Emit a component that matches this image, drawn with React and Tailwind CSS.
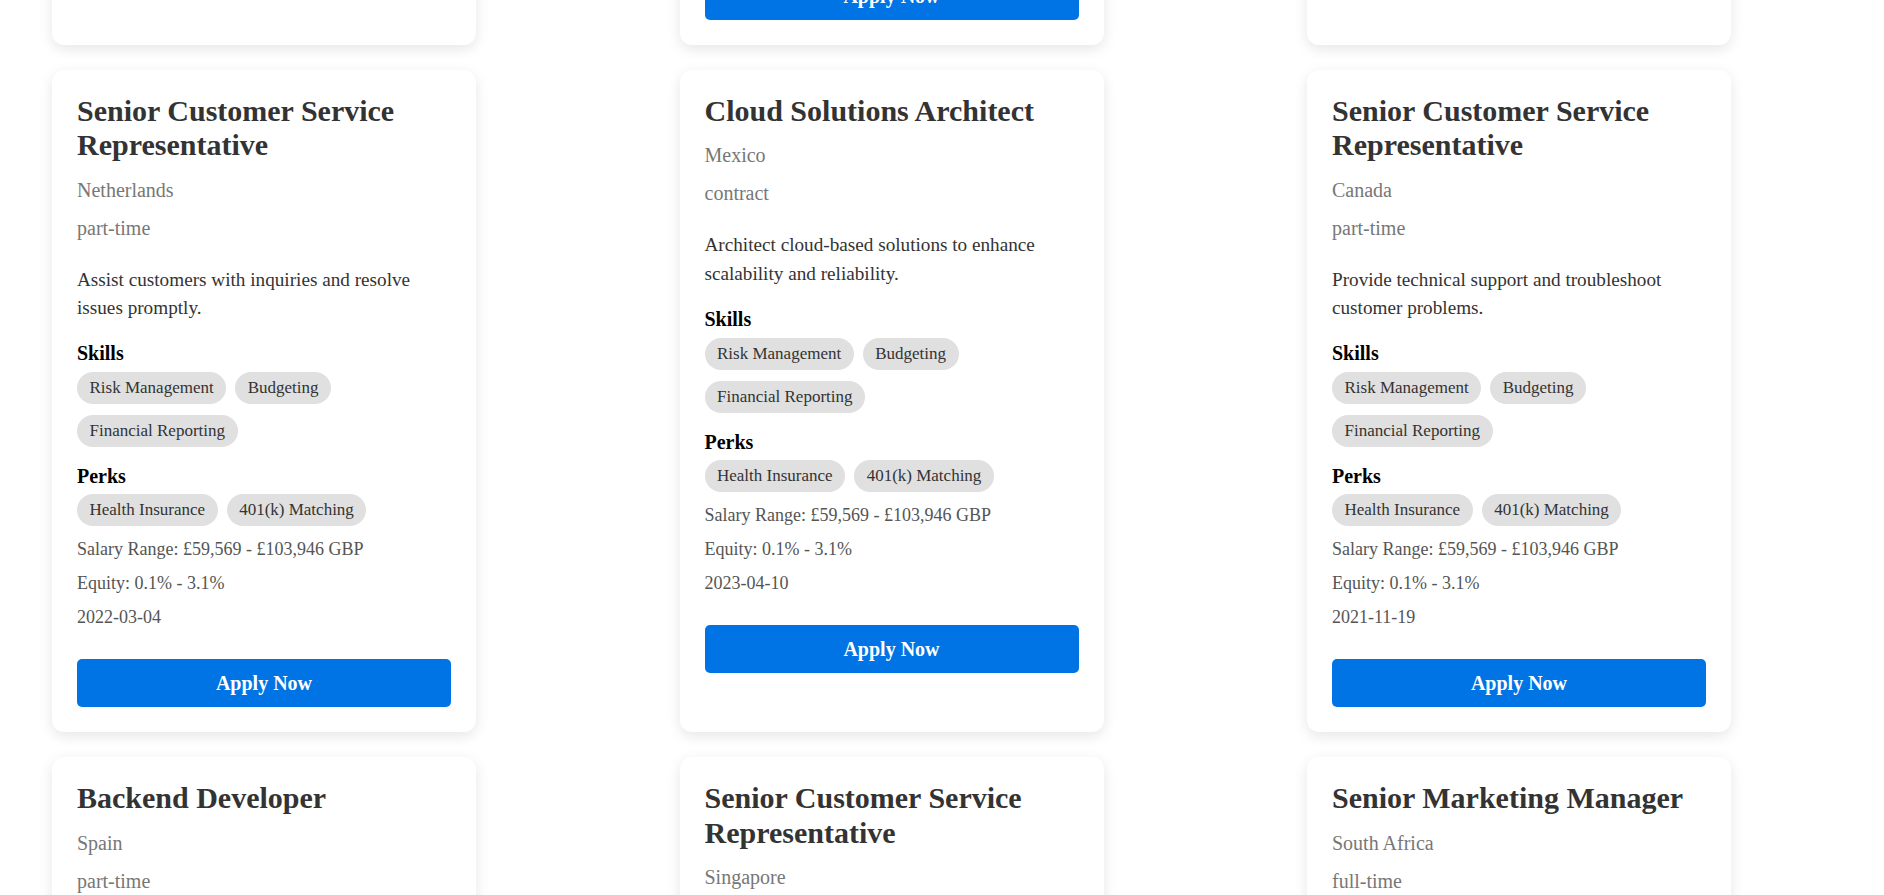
import React from "react";

const SKILLS = ["Risk Management", "Budgeting", "Financial Reporting"];
const PERKS = ["Health Insurance", "401(k) Matching"];

const jobs = [
  { title: "Data Analyst", location: "Germany", type: "full-time", desc: "Analyze data sets to provide actionable business insights.", date: "2022-07-15" },
  { title: "Senior Customer Service Representative", location: "Japan", type: "contract", desc: "Assist customers with inquiries and resolve issues promptly.", date: "2023-01-22" },
  { title: "Product Designer", location: "France", type: "remote", desc: "Design intuitive user experiences for our products.", date: "2022-11-08" },
  { title: "Senior Customer Service Representative", location: "Netherlands", type: "part-time", desc: "Assist customers with inquiries and resolve issues promptly.", date: "2022-03-04" },
  { title: "Cloud Solutions Architect", location: "Mexico", type: "contract", desc: "Architect cloud-based solutions to enhance scalability and reliability.", date: "2023-04-10" },
  { title: "Senior Customer Service Representative", location: "Canada", type: "part-time", desc: "Provide technical support and troubleshoot customer problems.", date: "2021-11-19" },
  { title: "Backend Developer", location: "Spain", type: "part-time", desc: "Build and maintain scalable server-side applications.", date: "2022-09-12" },
  { title: "Senior Customer Service Representative", location: "Singapore", type: "full-time", desc: "Assist customers with inquiries and resolve issues promptly.", date: "2023-02-18" },
  { title: "Senior Marketing Manager", location: "South Africa", type: "full-time", desc: "Lead marketing campaigns to grow brand awareness.", date: "2021-08-30" },
];

function Chip({ label }) {
  return (
    <span className="inline-block rounded-full bg-[#e0e0e0] px-[12.5px] py-[6px] text-[17px] leading-[20px] text-[#333]">
      {label}
    </span>
  );
}

function Card({ job }) {
  return (
    <div className="flex flex-col rounded-[12px] bg-white px-[25px] pt-[24px] pb-[25px] shadow-[0_4px_14px_rgba(0,0,0,0.1)]">
      <h2 className="text-[30px] font-bold leading-[34.5px] text-[#333]">{job.title}</h2>
      <p className="mt-[16px] text-[20px] leading-[23px] text-[#777]">{job.location}</p>
      <p className="mt-[15px] text-[20px] leading-[23px] text-[#777]">{job.type}</p>
      <p className="mt-[26px] text-[19.2px] leading-[28.8px] text-[#333]">{job.desc}</p>
      <h3 className="mt-[19px] text-[20px] font-bold leading-[23px] text-black">Skills</h3>
      <div className="mt-[7px] flex flex-wrap gap-x-[9px] gap-y-[11px]">
        {SKILLS.map((s) => (
          <Chip key={s} label={s} />
        ))}
      </div>
      <h3 className="mt-[18px] text-[20px] font-bold leading-[23px] text-black">Perks</h3>
      <div className="mt-[6px] flex flex-wrap gap-x-[9px] gap-y-[11px]">
        {PERKS.map((s) => (
          <Chip key={s} label={s} />
        ))}
      </div>
      <p className="mt-[13px] text-[18px] leading-[21px] text-[#555]">Salary Range: £59,569 - £103,946 GBP</p>
      <p className="mt-[13px] text-[18px] leading-[21px] text-[#555]">Equity: 0.1% - 3.1%</p>
      <p className="mt-[13px] text-[18px] leading-[21px] text-[#555]">{job.date}</p>
      <div>
        <button className="mt-[31px] h-[48px] w-full rounded-[5px] bg-[#0074e4] text-[20px] font-bold text-white">
          Apply Now
        </button>
      </div>
    </div>
  );
}

export default function App() {
  return (
    <div className="min-h-screen bg-white font-['Liberation_Serif',serif]">
      <div className="-mt-[618px] grid grid-cols-[repeat(3,424px)] gap-x-[203.5px] gap-y-[25px] pl-[52px] pb-[40px]">
        {jobs.map((j, i) => (
          <Card key={i} job={j} />
        ))}
      </div>
    </div>
  );
}
